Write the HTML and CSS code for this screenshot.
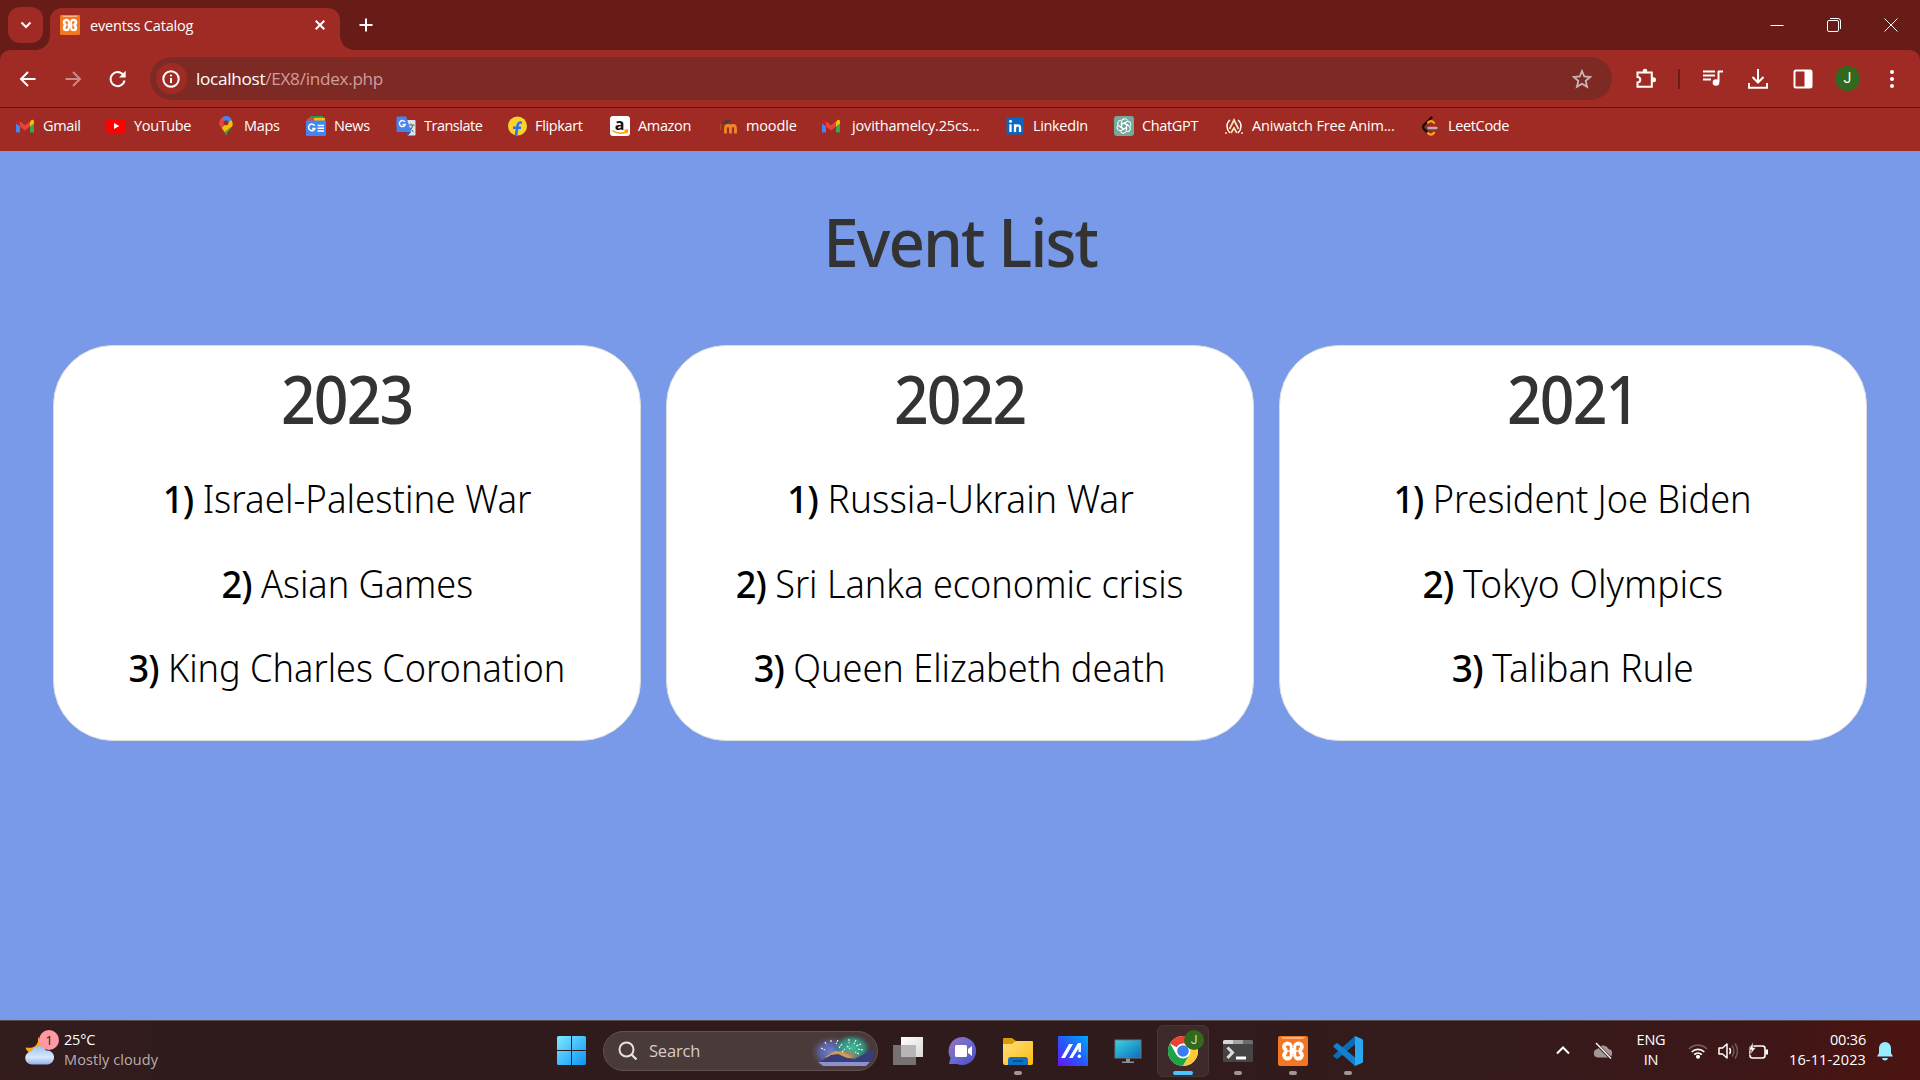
FILE: index.html
```
<!DOCTYPE html>
<html lang="en">
<head>
<meta charset="utf-8">
<title>eventss Catalog</title>
<link rel="stylesheet" href="styles.css">
</head>
<body>
<svg class="defs" aria-hidden="true">
  <defs>
    <symbol id="gmail" viewBox="0 0 20 20">
      <path d="M1 5v10.500a1 1 0 0 0 1 1h3V9z" fill="#4285f4"/>
      <path d="M19 5v10.500a1 1 0 0 1-1 1h-3V9z" fill="#34a853"/>
      <path d="M1 5.500v2l4 3V6L3.500 4A1.600 1.600 0 0 0 1 5.500z" fill="#c5221f"/>
      <path d="M19 5.500v2l-4 3V6l1.500-2A1.600 1.600 0 0 1 19 5.500z" fill="#fbbc04"/>
      <path d="M5 5.300v5.200l5 4 5-4V5.300l-5 3.900z" fill="#ea4335"/>
    </symbol>
    <symbol id="xampp" viewBox="0 0 30 30">
      <rect width="30" height="30" rx="2" fill="#f37623"/>
      <path d="M3 1h24l-2 2H5z" fill="#fbb483"/>
      <g fill="#fff"><circle cx="9.500" cy="10.800" r="5.300"/><circle cx="20.500" cy="10.800" r="5.300"/><circle cx="9.500" cy="19.200" r="5.300"/><circle cx="20.500" cy="19.200" r="5.300"/><path d="M8 12h14v6H8z"/></g>
      <g fill="none" stroke="#f37623" stroke-width="2.600" stroke-linecap="round" stroke-linejoin="round"><path d="M9.300 10.700h1.200v2.500M20.700 10.700h-1.200v2.500M9.300 19.300h1.200v-2.500M20.700 19.300h-1.200v-2.500" /></g>
    </symbol>
    <linearGradient id="winG" x1="0" y1="0" x2="1" y2="1"><stop offset="0" stop-color="#7eeaff"/><stop offset="1" stop-color="#0a93f5"/></linearGradient>
    <linearGradient id="chatG" x1="0" y1="0" x2="1" y2="1"><stop offset="0" stop-color="#9a70b8"/><stop offset=".5" stop-color="#6a6bd0"/><stop offset="1" stop-color="#4c4ac4"/></linearGradient>
    <linearGradient id="folderG" x1="0" y1="0" x2="1" y2="1"><stop offset="0" stop-color="#ffdf7a"/><stop offset="1" stop-color="#fcbc12"/></linearGradient>
    <linearGradient id="asusG" x1="0" y1="1" x2="1" y2="0"><stop offset="0" stop-color="#6a13f6"/><stop offset=".45" stop-color="#2a54fa"/><stop offset="1" stop-color="#00a8fb"/></linearGradient>
    <linearGradient id="pcG" x1="0" y1="0" x2="1" y2="1"><stop offset="0" stop-color="#38d3dd"/><stop offset="1" stop-color="#0d6fc0"/></linearGradient>
    <linearGradient id="taskG" x1="0" y1="0" x2="1" y2="1"><stop offset="0" stop-color="#fff"/><stop offset="1" stop-color="#d8d8d8"/></linearGradient>
    <linearGradient id="cloudG" x1="0" y1="0" x2="0" y2="1"><stop offset="0" stop-color="#9dc2f7"/><stop offset=".6" stop-color="#d9e8fb"/><stop offset="1" stop-color="#8eb2ee"/></linearGradient>
    <radialGradient id="glowA"><stop offset="0" stop-color="#6f82d8"/><stop offset=".6" stop-color="#5a68b0" stop-opacity=".8"/><stop offset="1" stop-color="#6c4d5c" stop-opacity="0"/></radialGradient>
    <radialGradient id="glowB"><stop offset="0" stop-color="#3fbf9a"/><stop offset=".65" stop-color="#2e9a86" stop-opacity=".85"/><stop offset="1" stop-color="#3d5f60" stop-opacity="0"/></radialGradient>
    <radialGradient id="glowC"><stop offset="0" stop-color="#f08a4a"/><stop offset="1" stop-color="#c0706a" stop-opacity="0"/></radialGradient>
  </defs>
</svg>

<header class="tabstrip">
  <button class="tab-search"><svg width="12" height="8" viewBox="0 0 12 8"><path d="M1.500 1.500 6 6l4.500-4.500" class="line"/></svg></button>
  <div class="tab">
    <svg class="favicon" width="20" height="20"><use href="#xampp"/></svg>
    <span class="tab-title">eventss Catalog</span>
    <svg class="tab-close" width="10" height="10" viewBox="0 0 10 10"><path d="m.7.700 8.600 8.600M9.300.700.700 9.300" class="line"/></svg>
  </div>
  <svg class="new-tab" width="14" height="14" viewBox="0 0 14 14"><path d="M7 .500v13M.500 7h13" class="line"/></svg>
  <div class="window-controls">
    <svg width="14" height="14" viewBox="0 0 14 14"><path d="M.500 7.500h13" class="thin"/></svg>
    <svg width="14" height="14" viewBox="0 0 14 14"><rect x=".500" y="2.500" width="11" height="11" rx="1.500" class="thin"/><path d="M3 .500h8a2.500 2.500 0 0 1 2.500 2.500v8" class="thin"/></svg>
    <svg width="14" height="14" viewBox="0 0 14 14"><path d="m.5.500 13 13M13.500.500l-13 13" class="thin"/></svg>
  </div>
</header>

<nav class="toolbar">
  <div class="slot"><svg width="20" height="20" viewBox="0 0 20 20"><path d="M17.500 10h-14M10 3l-7 7 7 7" class="line"/></svg></div>
  <div class="slot dim"><svg width="20" height="20" viewBox="0 0 20 20"><path d="M2.500 10h14M10 3l7 7-7 7" class="line"/></svg></div>
  <div class="slot"><svg width="20" height="20" viewBox="0 0 20 20"><path d="M16.500 11.500A7 7 0 1 1 15.300 6" class="line"/><path d="M17.700 1.800v6.700H11z" fill="#fff"/></svg></div>
  <div class="omnibox">
    <span class="site-info"><svg width="18" height="18" viewBox="0 0 18 18"><circle cx="9" cy="9" r="7.700" class="line"/><path d="M9 8v5" class="line"/><circle cx="9" cy="5.500" r="1.100" fill="#fff"/></svg></span>
    <span class="url">localhost<span class="path">/EX8/index.php</span></span>
    <svg class="star" width="20" height="20" viewBox="0 0 20 20"><path d="m10 2 2.300 5.500 6 .500-4.600 3.900 1.400 5.900L10 14.700l-5.100 3.100 1.400-5.900L1.700 8l6-.5z"/></svg>
  </div>
  <div class="slot ext"><svg width="22" height="22" viewBox="0 0 22 22"><path d="M2.500 4.500h14.300v14.300H2.500V14.500a2.800 2.800 0 0 0 0-5.600z" class="line"/><circle cx="10" cy="3" r="2.300" fill="#fff"/><circle cx="18.500" cy="11.700" r="2.500" fill="#fff"/></svg></div>
  <i class="divider"></i>
  <div class="slot"><svg width="20" height="20" viewBox="0 0 20 20"><path d="M0 2.500h12M0 6.500h12M0 10.500h8" class="line"/><path d="M15 2.500h5M15.500 2v11" class="line"/><circle cx="13" cy="13.500" r="3.300" fill="#fff"/></svg></div>
  <div class="slot"><svg width="20" height="20" viewBox="0 0 20 20"><path d="M10 0v13M4.500 8l5.500 5.500L15.500 8M1 14v4.800h18V14" class="line"/></svg></div>
  <div class="slot"><svg width="20" height="20" viewBox="0 0 20 20"><rect x="1.500" y="1.500" width="17" height="17" rx="1.500" class="line"/><path d="M11.500 1h7v18h-7z" fill="#fff"/></svg></div>
  <div class="slot"><span class="avatar">J</span></div>
  <div class="slot"><svg width="20" height="20" viewBox="0 0 20 20" fill="#fff"><circle cx="10" cy="3" r="2"/><circle cx="10" cy="10" r="2"/><circle cx="10" cy="17" r="2"/></svg></div>
</nav>

<nav class="bookmarks">
  <a class="bm b-gmail"><svg width="20" height="20"><use href="#gmail"/></svg><span>Gmail</span></a>
  <a class="bm b-yt"><svg width="20" height="20" viewBox="0 0 20 20"><rect y="3" width="20" height="14" rx="3.500" fill="#f00"/><path d="m8 7 5.300 3L8 13z" fill="#fff"/></svg><span>YouTube</span></a>
  <a class="bm b-maps"><svg width="20" height="20" viewBox="0 0 20 20"><path d="M3.300 6.500c0 5 5 6.500 6.700 13 1.700-6.500 6.700-8 6.700-13z" fill="#34a853"/><path d="M3.300 6.500c0 2 1 3.800 2.500 5.500L14 2 10 .200A6.500 6.500 0 0 0 3.300 6.500z" fill="#ea4335"/><path d="M5.800 12 15 3.500c2 3 2 5 1 7L8.500 16z" fill="#fbbc04"/><path d="m9 16.500 7-6c-1.500 3-4.700 4.500-6 9z" fill="#34a853"/><path d="M7.500.700A6.700 6.700 0 0 1 15.600 3.500L11 8 6 3z" fill="#4285f4"/><circle cx="10" cy="6.700" r="2.500" fill="#a02b24"/></svg><span>Maps</span></a>
  <a class="bm b-news"><svg width="20" height="20" viewBox="0 0 20 20"><path d="M4 0h13v6H3z" fill="#1e9e4c"/><path d="m1 2.500 13-1.500 2 5H1z" fill="#ea4335"/><path d="M8 2l11-.3V7H8z" fill="#fbbc04"/><rect y="4.500" width="20" height="15.500" rx="1" fill="#4285f4"/><path d="M8.700 9.700A3.300 3.300 0 1 0 9 12.500H6M11.500 9.500H18M11.500 12.300H18M11.500 15H18" fill="none" stroke="#fff" stroke-width="1.500"/></svg><span>News</span></a>
  <a class="bm b-tr"><svg width="20" height="20" viewBox="0 0 20 20"><path d="M8 4h10.500a1 1 0 0 1 1 1v13.500a1 1 0 0 1-1 1H12z" fill="#dce2e6"/><path d="M11.500 9h7M15 7.500V9M17 9c-1 4-3 5.500-4.500 6.500M13.500 11.500l4 4.500" fill="none" stroke="#607078" stroke-width="1.100"/><path d="M1.500.5h8.700L15 16H1.500a1 1 0 0 1-1-1V1.500a1 1 0 0 1 1-1z" fill="#4584ef"/><path d="M9 6A3 3 0 1 0 9.300 8.500H6.500" fill="none" stroke="#fff" stroke-width="1.400"/><path d="m10.500 16 4.500 0-3 3.500z" fill="#1c56c4"/></svg><span>Translate</span></a>
  <a class="bm b-flip"><svg width="20" height="20" viewBox="0 0 20 20"><circle cx="10.500" cy="10" r="9.500" fill="#fbd12c"/><path d="M15 6.800c-3-.8-4 .3-4.500 3L9 19.500M6 11.700h8" fill="none" stroke="#2874f0" stroke-width="2.600"/></svg><span>Flipkart</span></a>
  <a class="bm b-amz"><svg width="20" height="20" viewBox="0 0 20 20"><rect width="20" height="20" rx="3" fill="#fff"/><text x="9.500" y="13.500" text-anchor="middle" class="amz">a</text><path d="M2.500 14.500c4.500 3.500 11 3.500 14.500.7M14.500 14.500l3-.3-.7 3" fill="none" stroke="#ff9900" stroke-width="1.500"/></svg><span>Amazon</span></a>
  <a class="bm b-moo"><svg width="20" height="20" viewBox="0 0 20 20"><path d="M7.500 17.500v-5q0-3 2.500-3t2.500 3v5M12.500 12.500q0-3 2.500-3t2.500 3v5" fill="none" stroke="#f0882b" stroke-width="2.800"/><path d="m3 7 6-3.500 4.500 1L9 8z" fill="#4b3a38"/><path d="M2.500 8v6" stroke="#b3521f" stroke-width="1"/></svg><span>moodle</span></a>
  <a class="bm b-jov"><svg width="20" height="20"><use href="#gmail"/></svg><span>jovithamelcy.25cs...</span></a>
  <a class="bm b-li"><svg width="20" height="20" viewBox="0 0 20 20"><rect x="1.500" y="1.500" width="17" height="17" rx="1" fill="#0a66c2"/><path d="M5.500 8.300V16M10 16V8.300M10 12q.2-2.700 2.700-2.700T15 12v4" fill="none" stroke="#fff" stroke-width="2.300"/><circle cx="5.500" cy="5.300" r="1.500" fill="#fff"/></svg><span>LinkedIn</span></a>
  <a class="bm b-gpt"><svg width="20" height="20" viewBox="0 0 20 20"><rect width="20" height="20" rx="3" fill="#74aa9c"/><g fill="none" stroke="#fff" stroke-width="1.100"><path id="petal" d="M7.500 11.500V5.700a3.200 3.200 0 0 1 6-1.200M7.500 8.500l4-2.400"/><use href="#petal" transform="rotate(60 10 10)"/><use href="#petal" transform="rotate(120 10 10)"/><use href="#petal" transform="rotate(180 10 10)"/><use href="#petal" transform="rotate(240 10 10)"/><use href="#petal" transform="rotate(300 10 10)"/></g></svg><span>ChatGPT</span></a>
  <a class="bm b-ani"><svg width="20" height="20" viewBox="0 0 20 20"><g fill="none" stroke="#fff"><path d="M6 4C2 7 2 13 6 17M14 4c4 3 4 9 0 13" stroke-width="1.500"/><path d="m5.500 13 4.500-9 4.500 9M7 17l3-5 3 5" stroke="#f6dfb4" stroke-width="1.800"/></g><path d="M1 16h2v2H1zM17 16h2v2h-2z" fill="#e8b66a"/></svg><span>Aniwatch Free Anim...</span></a>
  <a class="bm b-leet"><svg width="20" height="20" viewBox="0 0 20 20" fill="none" stroke-width="2.300" stroke-linecap="round"><path d="M11.500 1.500 3.800 9.300q-1.500 1.700 0 3.500L8 17" stroke="#0b0b0b"/><path d="M8 6.500q3-3 6 .3M8 17q3 3.300 6-.3" stroke="#ffa116"/><path d="M8.500 12h8" stroke="#b3b3b3"/></svg><span>LeetCode</span></a>
</nav>

<main class="page">
  <h1 class="heading"><span>Event List</span></h1>
  <section class="cards">
    <article class="card">
      <h2 class="heading"><span>2023</span></h2>
      <p class="wide"><span><b>1)</b> Israel-Palestine War</span></p>
      <p><span><b>2)</b> Asian Games</span></p>
      <p><span><b>3)</b> King Charles Coronation</span></p>
    </article>
    <article class="card">
      <h2 class="heading"><span>2022</span></h2>
      <p class="wider"><span><b>1)</b> Russia-Ukrain War</span></p>
      <p><span><b>2)</b> Sri Lanka economic crisis</span></p>
      <p><span><b>3)</b> Queen Elizabeth death</span></p>
    </article>
    <article class="card">
      <h2 class="heading"><span>2021</span></h2>
      <p><span><b>1)</b> President Joe Biden</span></p>
      <p class="wider"><span><b>2)</b> Tokyo Olympics</span></p>
      <p class="wider"><span><b>3)</b> Taliban Rule</span></p>
    </article>
  </section>
</main>

<footer class="taskbar">
  <div class="weather">
    <div class="weather-icon">
      <svg width="30" height="30" viewBox="0 0 30 30"><path d="M13 1c1 9-5 12-12.500 10.500C2 17 8 19 13 17c6-2 6-10 0-16z" fill="#f5a623"/><path d="M7 28.500a6.500 6.500 0 0 1-.5-13 8 8 0 0 1 14.500-1 7 7 0 0 1 2 14z" fill="url(#cloudG)"/></svg>
      <span class="badge">1</span>
    </div>
    <div class="weather-text"><span>25°C</span><span class="muted">Mostly cloudy</span></div>
  </div>
  <div class="apps">
    <svg class="start" width="29" height="29" viewBox="0 0 29 29"><path d="M0 1.500A1.500 1.500 0 0 1 1.500 0H14v14H0zM15 0h12.500A1.500 1.500 0 0 1 29 1.500V14H15zM0 15h14v14H1.500A1.500 1.500 0 0 1 0 27.500zM15 15h14v12.500a1.500 1.500 0 0 1-1.500 1.500H15z" fill="url(#winG)"/></svg>
    <div class="search">
      <svg width="20" height="20" viewBox="0 0 20 20"><circle cx="8.500" cy="8.500" r="7" fill="none" stroke="#e6e0e0" stroke-width="2"/><path d="m13.500 13.500 5 5" stroke="#e6e0e0" stroke-width="2.400"/></svg>
      <span>Search</span>
      <svg class="fireworks" width="64" height="32" viewBox="0 0 64 32"><ellipse cx="20" cy="17" rx="20" ry="16" fill="url(#glowA)"/><ellipse cx="41" cy="13" rx="19" ry="14" fill="url(#glowB)"/><ellipse cx="35" cy="21" rx="15" ry="7" fill="url(#glowC)"/><path d="M14 22l10-6 8 1 10 6-12-1z" fill="#d79a55"/><path d="M7 28 20 20l7-1 9 4 8 1 19-10v7l-4 7z" fill="#363f7d"/><path d="M7 27h52l-4 4H12z" fill="#8f8fc9"/><path d="M14 7l1.500 3M20 5v3M27 5l-2 4M10 13l4 2M31 9l-3 4M31 17l3-3M38 4v4M45 5l-2 4M50 9l-5 2M52 15l-6-1M36 11l3 3M48 19l-4-2" stroke="#f4f1dc" stroke-width="1.200" stroke-dasharray="2 1"/></svg>
    </div>
    <div class="app"><svg width="30" height="30" viewBox="0 0 30 30"><rect y="9" width="23" height="20" fill="#777272"/><path d="M8 1h22v20H8z" fill="url(#taskG)"/><path d="M8 9h15v12H8z" fill="#b7b5b5"/></svg></div>
    <div class="app"><svg width="30" height="30" viewBox="0 0 30 30"><path d="M15 1a14 14 0 1 1-6 27H1l1.500-6A14 14 0 0 1 15 1z" fill="url(#chatG)"/><rect x="7" y="9" width="12" height="12" rx="1.500" fill="#fff"/><path d="m20 13 4-3v10l-4-3z" fill="#fff"/></svg></div>
    <div class="app run"><svg width="30" height="30" viewBox="0 0 30 30"><path d="M0 3a1 1 0 0 1 1-1h8l4 3v6H0z" fill="#d99a0a"/><path d="M0 8h9l4-3h16a1 1 0 0 1 1 1v21a2 2 0 0 1-2 2H2a2 2 0 0 1-2-2z" fill="url(#folderG)"/><path d="M5 29v-5a3 3 0 0 1 3-3h14a3 3 0 0 1 3 3v5z" fill="#0f6fc5"/><path d="M10 25h10" stroke="#08447f" stroke-width="1.500"/></svg></div>
    <div class="app"><svg width="30" height="30" viewBox="0 0 30 30"><path d="M0 0h30v30H0z" fill="url(#asusG)"/><path d="m3 22 8-14h4L7 22zM11 22l9-15h3v9h-2.500v-3.500L14.500 22z" fill="#fff"/><circle cx="21.300" cy="20.300" r="1.700" fill="#fff"/></svg></div>
    <div class="app"><svg width="30" height="30" viewBox="0 0 30 30"><path d="M1.500 3.500h27v19h-27z" fill="#6c7780"/><path d="M2.500 4.500h25v17h-25z" fill="url(#pcG)"/><path d="M13 22.500h4v3h4v1.500H9v-1.500h4z" fill="#8b8f95"/></svg></div>
    <div class="app active"><svg width="30" height="30" viewBox="0 0 30 30"><circle cx="15" cy="15" r="15" fill="#fff"/><path d="M15 15 2 7.500A15 15 0 0 1 28 7.500H15z" fill="#ea4335"/><path d="M2 7.500A15 15 0 0 0 15 30l6.500-11.200L15 15 8.500 18.700z" fill="#1ea446"/><path d="M28 7.500A15 15 0 0 1 15 30l6.500-11.300V7.500z" fill="#fcc934"/><circle cx="15" cy="15" r="7.500" fill="#fff"/><circle cx="15" cy="15" r="5.800" fill="#3b7ded"/></svg><span class="mini">J</span></div>
    <div class="app run"><svg width="30" height="30" viewBox="0 0 30 30"><rect y="4" width="30" height="22" rx="1.500" fill="#454545"/><path d="M0 5.500A1.500 1.500 0 0 1 1.500 4H10v4H0z" fill="#d8d8d8"/><path d="M10 4h10v4H10z" fill="#a8a3a3"/><path d="M20 4h8.500A1.500 1.500 0 0 1 30 5.500V8H20z" fill="#6f6b6b"/><path d="m4.500 11.500 5 5-5 5.500" fill="none" stroke="#dcdcdc" stroke-width="3"/><path d="M13 20.500h10v3H13z" fill="#fff"/></svg></div>
    <div class="app run"><svg width="30" height="30"><use href="#xampp"/></svg></div>
    <div class="app run"><svg width="30" height="30" viewBox="0 0 30 30"><path d="M22 8.500 5 22.500a1.500 1.500 0 0 1-2 0l-2.300-2a1 1 0 0 1 0-1.500L22 0z" fill="#0a6cb5"/><path d="M22 21.500 5 7.500a1.500 1.500 0 0 0-2 0L.700 9.500a1 1 0 0 0 0 1.500L22 30z" fill="#1180cf"/><path d="m22 0 7 3q1 .5 1 1.500v21q0 1-1 1.500l-7 3z" fill="#29a8f0"/></svg></div>
  </div>
  <div class="tray">
    <svg class="chev" width="14" height="9" viewBox="0 0 14 9"><path d="m1 7.500 6-6 6 6" class="line"/></svg>
    <svg class="cloud" width="20" height="18" viewBox="0 0 20 18"><path d="M4.500 15.500a4.300 4.300 0 0 1 0-8.500 6 6 0 0 1 11 0 4.300 4.300 0 0 1 0 8.500z" fill="#a09696"/><path d="m3 1.500 15 15" stroke="#3a1b1b" stroke-width="3"/><path d="m3 1 15 15.500" stroke="#fff" stroke-width="1.300"/></svg>
    <div class="lang"><span>ENG</span><span>IN</span></div>
    <svg class="wifi" width="20" height="16" viewBox="0 0 20 16" fill="none" stroke="#fff" stroke-width="1.700"><path d="M1 6a12.500 12.500 0 0 1 18 0" stroke="#715a59"/><path d="M3.700 9a8.700 8.700 0 0 1 12.600 0M6.200 11.700a5.500 5.500 0 0 1 7.600 0"/><circle cx="10" cy="13.700" r="1.200" fill="#fff"/></svg>
    <svg class="vol" width="20" height="18" viewBox="0 0 20 18" fill="none" stroke="#fff" stroke-width="1.500"><path d="M1 6h3.500L9 2v14l-4.500-4H1z" stroke-linejoin="round"/><path d="M11.500 6q2 3 0 6"/><path d="M14 3.500q4 5.500 0 11M17 1.500q5 7.500 0 15" stroke="#715a59"/></svg>
    <svg class="bat" width="20" height="18" viewBox="0 0 20 18"><rect x="2" y="4" width="15" height="12" rx="2.500" fill="none" stroke="#fff" stroke-width="1.600"/><path d="M17.500 7.500H20v5h-2.500z" fill="#fff"/><path d="M5 0 .500 8h3l-1.500 5 6-7.500H5z" fill="#fff" stroke="#3d1819" stroke-width=".600"/></svg>
    <div class="clock"><span>00:36</span><span class="date">16-11-2023</span></div>
    <svg class="bell" width="16" height="20" viewBox="0 0 16 20"><path d="M8 1a6 6 0 0 1 6 6v5l2 3.500H0L2 12V7a6 6 0 0 1 6-6zM5 17h6q-.5 2.500-3 2.500T5 17z" fill="#99ebff"/></svg>
  </div>
</footer>
</body>
</html>
```
FILE: styles.css
```
* { box-sizing: border-box; }
body { margin: 0; width: 1920px; height: 1080px; overflow: hidden; display: flex; flex-direction: column; background: #681c17; color: #fff; font-family: "Open Sans", "Noto Sans", sans-serif; font-size: 14.5px; }
svg { display: block; flex: none; }
.defs { position: absolute; width: 0; height: 0; }
.line { fill: none; stroke: #fff; stroke-width: 2; }
.thin { fill: none; stroke: #fff; stroke-width: 1; }

.tabstrip { height: 50px; flex: none; display: flex; align-items: center; padding-left: 8px; }
.tab-search { width: 35px; height: 36px; border: 0; border-radius: 12px; background: #9f2b24; display: flex; align-items: center; justify-content: center; padding: 0; }
.tab { position: relative; align-self: flex-end; width: 290px; height: 42px; margin-left: 7px; padding: 0 15px 8px 10px; border-radius: 12px 12px 0 0; background: #9f2b24; display: flex; align-items: center; }
.tab::before, .tab::after { content: ""; position: absolute; bottom: 0; width: 14px; height: 14px; }
.tab::before { left: -14px; background: radial-gradient(circle at 0 0, transparent 13.500px, #9f2b24 14px); }
.tab::after { right: -14px; background: radial-gradient(circle at 100% 0, transparent 13.500px, #9f2b24 14px); }
.tab-title { flex: 1; margin-left: 10px; white-space: nowrap; letter-spacing: -.17px; }
.new-tab { margin-left: 19px; }
.window-controls { margin-left: auto; display: flex; gap: 43px; margin-right: 22px; }

.toolbar { height: 57px; flex: none; display: flex; align-items: center; padding: 0 5px 0 6px; background: #9f2b24; border-radius: 10px 10px 0 0; }
.slot { width: 45px; display: flex; justify-content: center; }
.dim { opacity: .45; }
.omnibox { width: 1463px; height: 43px; margin-left: 9px; border-radius: 22px; background: #7d2a25; display: flex; align-items: center; padding: 0 20px 0 6px; }
.site-info { width: 31px; height: 31px; border-radius: 50%; background: #9f2b24; display: flex; align-items: center; justify-content: center; }
.url { margin-left: 9px; font-size: 17.2px; letter-spacing: -.3px; }
.path { color: #cf9e9b; }
.star { margin-left: auto; fill: none; stroke: #c8b5b4; stroke-width: 1.800; }
.ext { margin-left: 11px; }
.divider { width: 2px; height: 20px; margin: 0 10px 0 10px; background: #6d1d18; }
.avatar { width: 25px; height: 25px; border-radius: 50%; background: #33691e; font: 14px/25px "Roboto", sans-serif; text-align: center; }

.bookmarks { height: 44px; flex: none; display: flex; padding: 8px 0 0 15px; background: #9f2b24; border-top: 1px solid #5a1511; }
.bm { display: flex; align-items: center; height: 20px; gap: 8px; white-space: nowrap; letter-spacing: -.35px; }
.bm span { margin-top: -2px; }
.b-gmail { width: 91px; } .b-yt { width: 110px; } .b-maps, .b-news { width: 90px; }
.b-tr { width: 111px; letter-spacing: -.5px; }
.b-flip { width: 103px; } .b-amz { width: 108px; }
.b-moo { width: 103px; letter-spacing: -.15px; }
.b-jov { width: 184px; gap: 11px; letter-spacing: -.15px; }
.b-li { width: 109px; } .b-gpt { width: 110px; }
.b-ani { width: 196px; letter-spacing: -.15px; }
.amz { font: bold 16px/1 "Open Sans", sans-serif; fill: #111; }

.page { flex: 1; background: #789ae9; padding: 50px 53px 0; color: #000; font-family: "Noto Sans", sans-serif; }
.heading { margin: 0; height: 80px; line-height: 80px; font-size: 67px; font-weight: 500; color: #333; text-align: center; letter-spacing: -2px; }
.heading span, .card p span { display: inline-block; white-space: nowrap; transform: scaleX(.95); }
.cards { display: grid; grid-template-columns: repeat(3, 588px); justify-content: space-between; margin-top: 64px; }
.card { height: 396px; padding-top: 12px; border: 1px solid #ddd; border-radius: 60px; background: #fff; }
.card .heading { margin-bottom: 18px; }
.card .heading span { transform: scaleX(.905); }
.card p { margin: 0; height: 84.5px; line-height: 84.5px; font-size: 38px; font-weight: 300; text-align: center; }
.card p.wide span { transform: scaleX(.965); }
.card p.wider span { transform: scaleX(.977); }
.card b { font-weight: 500; letter-spacing: -1px; }

.taskbar { height: 60px; flex: none; display: flex; align-items: center; border-top: 1px solid #5b4a4a; background: linear-gradient(90deg, #341c1c 0, #2f1b1c 12%, #301b1c 60%, #361a1b 80%, #3c1718 90%, #491412 98%); line-height: 20px; }
.weather { width: 557px; padding-left: 25px; display: flex; align-items: center; }
.weather-icon { position: relative; }
.badge { position: absolute; left: 14px; top: -6px; width: 20px; height: 20px; border-radius: 50%; background: #ff99a4; color: #222; text-align: center; font-size: 13.5px; }
.weather-text, .lang, .clock { display: flex; flex-direction: column; letter-spacing: -.2px; margin-top: -2px; }
.weather-text { margin-left: 9px; align-items: flex-start; }
.muted { color: #b9aeae; letter-spacing: .1px; }
.date { letter-spacing: .13px; }
.apps { display: flex; align-items: center; }
.search { width: 275px; height: 40px; margin: 0 2px 0 17px; padding: 0 2px 0 14px; border: 1px solid #605150; border-radius: 20px; background: #4b3a3a; display: flex; align-items: center; color: #d5cdcd; font-size: 16.5px; letter-spacing: -.2px; }
.search span { margin-left: 11px; }
.fireworks { margin-left: auto; }
.app { position: relative; width: 55px; height: 50px; display: flex; align-items: center; justify-content: center; }
.run::after, .active::after { content: ""; position: absolute; bottom: 1px; width: 8px; height: 4px; border-radius: 2px; background: #a09696; }
.active::before { content: ""; position: absolute; left: 2px; width: 50px; height: 50px; border: 1px solid #463536; border-radius: 6px; background: #3e2a2b; }
.active::after { width: 20px; background: #4cc2ff; }
.active svg { position: relative; }
.mini { position: absolute; left: 29px; top: 4px; width: 20px; height: 20px; border-radius: 50%; background: #33691e; color: #cfe0c8; font: 12px/20px "Roboto", sans-serif; text-align: center; }
.tray { margin-left: auto; display: flex; align-items: center; padding-right: 27px; }
.cloud { margin-left: 23px; }
.lang { width: 60px; margin-left: 8px; margin-right: 7px; align-items: center; }
.vol, .bat { margin-left: 10px; }
.clock { width: 98px; align-items: flex-end; }
.bell { margin-left: 11px; }
```
